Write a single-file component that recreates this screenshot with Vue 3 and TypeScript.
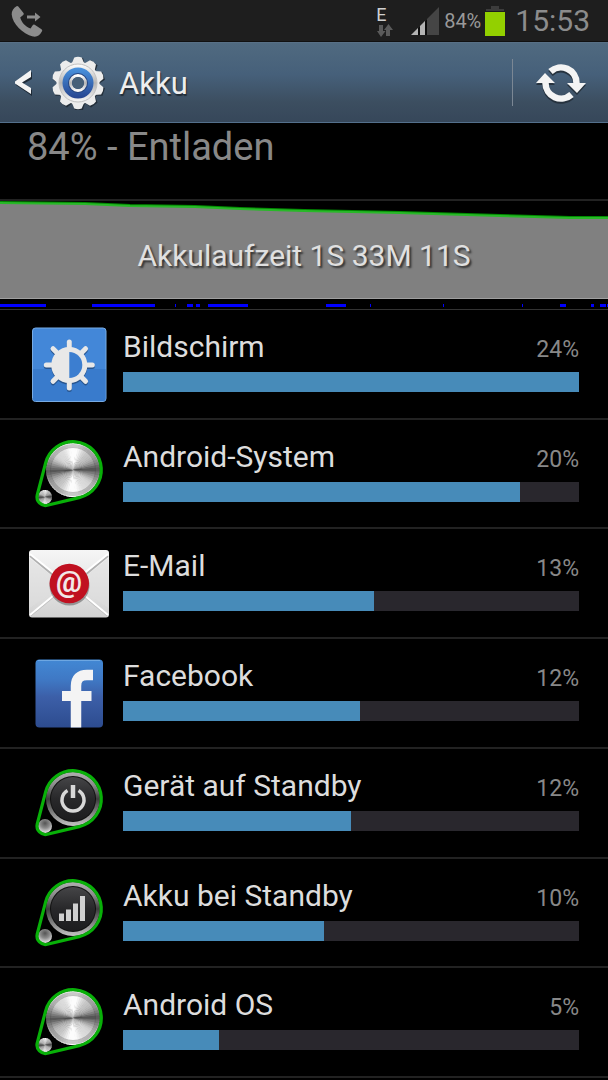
<script setup lang="ts">
type IconName = 'display' | 'metal' | 'mail' | 'facebook' | 'power' | 'signal'

interface UsageItem {
  name: string
  percent: number
  fill: number
  icon: IconName
}

const items: UsageItem[] = [
  { name: 'Bildschirm', percent: 24, fill: 100, icon: 'display' },
  { name: 'Android-System', percent: 20, fill: 87, icon: 'metal' },
  { name: 'E-Mail', percent: 13, fill: 55, icon: 'mail' },
  { name: 'Facebook', percent: 12, fill: 52, icon: 'facebook' },
  { name: 'Gerät auf Standby', percent: 12, fill: 50, icon: 'power' },
  { name: 'Akku bei Standby', percent: 10, fill: 44, icon: 'signal' },
  { name: 'Android OS', percent: 5, fill: 21, icon: 'metal' },
]

// Screen-on periods along the timeline: [start, length]
const activePeriods: [number, number][] = [
  [0, 46], [92, 63], [175, 1], [187, 6], [196, 4], [208, 40], [326, 20],
  [370, 1], [443, 1], [522, 1], [560, 6], [591, 3], [600, 6], [607, 1],
]

const gearTeeth = Array.from({ length: 10 }, (_, i) => i * 36)
const spokes = Array.from({ length: 8 }, (_, i) => i * 45)

function isDrum(icon: IconName): boolean {
  return icon === 'metal' || icon === 'power' || icon === 'signal'
}

// Brushed-metal disc built from thin sectors, brightest at top and bottom
function sectors(cx: number, cy: number, r: number) {
  const count = 60
  const step = (Math.PI * 2) / count
  return Array.from({ length: count }, (_, i) => {
    const a = i * step
    const b = a + step * 1.4
    const light = Math.abs(Math.sin(a + 0.12))
    const ripple = Math.cos(a * 6) * 12
    const v = Math.min(252, Math.round(92 + 155 * Math.pow(light, 0.9) - ripple))
    return {
      d: `M${cx} ${cy}L${cx + r * Math.cos(a)} ${cy + r * Math.sin(a)}A${r} ${r} 0 0 1 ${cx + r * Math.cos(b)} ${cy + r * Math.sin(b)}Z`,
      color: `rgb(${v},${v},${v})`,
    }
  })
}
const bigDisc = sectors(45, 37, 27)
const smallDisc = sectors(17, 64, 7)
</script>

<template>
  <div class="screen">
    <svg class="defs" width="0" height="0" aria-hidden="true">
      <defs>
        <linearGradient id="silver" x1="0" y1="0" x2="0" y2="1">
          <stop offset="0" stop-color="#fff" />
          <stop offset="0.5" stop-color="#b4b4b4" />
          <stop offset="1" stop-color="#f8f8f8" />
        </linearGradient>
        <linearGradient id="gearBlue" x1="0" y1="0" x2="0" y2="1">
          <stop offset="0" stop-color="#4a94e0" />
          <stop offset="1" stop-color="#26448f" />
        </linearGradient>
        <linearGradient id="fbBlue" x1="0" y1="0" x2="0" y2="1">
          <stop offset="0" stop-color="#4288d4" />
          <stop offset="0.3" stop-color="#3f78c4" />
          <stop offset="0.55" stop-color="#3c5fa8" />
          <stop offset="1" stop-color="#2d4c8f" />
        </linearGradient>
        <linearGradient id="paper" x1="0" y1="0" x2="0" y2="1">
          <stop offset="0" stop-color="#f6f6f6" />
          <stop offset="1" stop-color="#d2d2d2" />
        </linearGradient>
        <linearGradient id="rim" x1="0" y1="0" x2="0" y2="1">
          <stop offset="0" stop-color="#b0b0b0" />
          <stop offset="0.25" stop-color="#8a8a8a" />
          <stop offset="0.5" stop-color="#3c3c3c" />
          <stop offset="0.75" stop-color="#808080" />
          <stop offset="1" stop-color="#c4c4c4" />
        </linearGradient>
        <linearGradient id="dark" x1="0" y1="0" x2="0" y2="1">
          <stop offset="0" stop-color="#454547" />
          <stop offset="0.5" stop-color="#28282a" />
          <stop offset="1" stop-color="#1c1c1e" />
        </linearGradient>
        <radialGradient id="bead" cx="0.5" cy="0.3" r="0.7">
          <stop offset="0" stop-color="#555" />
          <stop offset="0.5" stop-color="#8c8c8c" />
          <stop offset="1" stop-color="#e8e8e8" />
        </radialGradient>
      </defs>
    </svg>

    <header class="status">
      <svg class="call" viewBox="0 0 36 36" aria-hidden="true">
        <path d="M9.500 3.200Q10.500 2.500 11.300 3.500L16.500 10Q17.300 11.200 16.200 12.100L13.200 14.500C14.500 19.500 18.500 23.500 23.500 25.500L25.700 22.200Q26.500 21 27.700 21.700L34.500 26.300Q35.700 27.200 35 28.300C33 32 30.300 34.300 26 33.500C15.500 31 5.500 20.500 4.700 11.500C4.500 8 6.500 4.800 9.500 3.200Z" />
        <path d="M20 12.500H28V9.500L33.500 14L28 18.500V15.500H20Z" />
      </svg>
      <div class="network">
        <span>E</span>
        <svg viewBox="0 0 18 13" aria-hidden="true">
          <path d="M3 1H7V7H9.500L5 13L1 7H3ZM10 12V6H8L12.500 0L17 6H14V12Z" />
        </svg>
      </div>
      <svg class="reception" viewBox="0 0 28 28" aria-hidden="true">
        <path d="M0 28L28 0V28Z" fill="#454545" />
        <path d="M0 28L7 21V28ZM9 28V19L14 14V28Z" fill="#b4b4b4" />
        <path d="M7 21L9 19V28H7ZM14 14L16 12V28H14Z" fill="#0c0c0c" />
      </svg>
      <span class="level">84%</span>
      <svg class="battery" viewBox="0 0 20 30" aria-hidden="true">
        <path d="M6 0H14V3H19V5H1V3H6Z" fill="#3c3c3c" />
        <rect y="6" width="20" height="24" fill="#93d000" />
      </svg>
      <time class="clock">15:53</time>
    </header>

    <nav class="action-bar">
      <button class="back" type="button" aria-label="Zurück">
        <svg class="chevron" viewBox="0 0 18 30" aria-hidden="true">
          <path d="M17 4V11L8 16L17 22V28L1 17V15Z" fill="#1e2a36" />
          <path d="M16 2V9L7 14.500L16 20V26L0 15.500V13.500Z" fill="#f4f4f4" />
        </svg>
        <svg class="gear" viewBox="-27 -27 54 54" aria-hidden="true">
          <g fill="#222d38" transform="translate(1 1)">
            <path v-for="a in gearTeeth" :key="a" :transform="`rotate(${a})`" d="M-6 -19L-4 -26H4L6 -19Z" />
            <circle r="21" />
          </g>
          <g fill="#ececec">
            <path v-for="a in gearTeeth" :key="a" :transform="`rotate(${a})`" d="M-6.500 -19L-3.700 -25.500Q0 -27 3.700 -25.500L6.500 -19Z" />
          </g>
          <circle r="21.500" fill="#ececec" />
          <circle r="19" fill="url(#silver)" stroke="#c0c0c0" />
          <circle r="15.500" fill="url(#gearBlue)" />
          <circle r="7.500" fill="none" stroke="#284680" stroke-width="5" />
          <circle r="7.500" fill="none" stroke="url(#silver)" stroke-width="3" />
          <circle r="6" fill="#476078" />
        </svg>
        <span class="title">Akku</span>
      </button>
      <button class="refresh" type="button" aria-label="Aktualisieren">
        <svg viewBox="-26 -22 52 44" aria-hidden="true">
          <g v-for="pass in 2" :key="pass" :class="pass === 1 ? 'shade' : 'face'" :transform="pass === 1 ? 'translate(0 2)' : ''">
            <path d="M-10.500 -11.500A15.500 15.500 0 0 1 15.500 0" fill="none" stroke-width="6.500" />
            <path d="M-15.500 0A15.500 15.500 0 0 0 10.500 11.500" fill="none" stroke-width="6.500" />
            <path d="M6 0H25L16 10ZM-25 0H-6L-16 -10Z" stroke="none" />
          </g>
        </svg>
      </button>
    </nav>

    <main>
      <h1>84% - Entladen</h1>

      <section class="history">
        <svg class="curve" viewBox="0 0 608 98" preserveAspectRatio="none" aria-hidden="true">
          <path d="M0 2L85 3L130 5L195 6L240 8L304 10L400 12L500 15L570 17H608V98H0Z" fill="#808080" />
          <path d="M0 97.500H608" stroke="#a0a0a0" />
          <path d="M0 1L85 2L130 4L195 5L240 7L304 9L400 11L500 14L570 16H608" fill="none" stroke="#008a00" stroke-width="2" />
          <path d="M0 2L85 3L130 5L195 6L240 8L304 10L400 12L500 15L570 17H608" fill="none" stroke="#28b828" stroke-width="2" />
        </svg>
        <p>Akkulaufzeit 1S 33M 11S</p>
        <svg class="timeline" viewBox="0 0 608 10" preserveAspectRatio="none" aria-hidden="true">
          <rect v-for="[x, w] in activePeriods" :key="x" :x="x" y="5" :width="w" height="3" fill="#00f" />
        </svg>
      </section>

      <ul class="usage">
        <li v-for="item in items" :key="item.name">
          <button class="row" type="button">
            <svg class="icon" viewBox="0 0 82 82" aria-hidden="true">
              <g v-if="item.icon === 'display'">
                <rect x="4.500" y="5" width="73.500" height="73.500" rx="3" fill="#4387d8" stroke="#77abe4" />
                <path d="M5 46H77.500V76Q77.500 78 75 78H7.500Q5 78 5 76Z" fill="#397bcc" />
                <g transform="translate(41.300 43.500)" stroke="#28558e" fill="#28558e" stroke-width="5" stroke-linecap="round">
                  <path v-for="a in spokes" :key="a" d="M0 -15V-23" :transform="`rotate(${a})`" />
                  <circle r="15.500" />
                </g>
                <g transform="translate(41.300 42)" stroke="#e8e8e8" fill="#e8e8e8" stroke-width="5" stroke-linecap="round">
                  <path v-for="a in spokes" :key="a" d="M0 -15V-23" :transform="`rotate(${a})`" />
                  <circle r="15.500" />
                  <path d="M0 -13A13 13 0 0 1 0 13Z" fill="#3c7ed0" stroke="none" />
                </g>
              </g>

              <g v-else-if="item.icon === 'mail'">
                <rect x="1" y="8" width="80" height="67.500" rx="3" fill="url(#paper)" />
                <path d="M1.500 16L41 48L80.500 16V66L41 40L1.500 66Z" fill="#dedede" opacity="0.6" />
                <path d="M2 73L31 49M80 73L51 49" stroke="#fff" stroke-width="2" />
                <path d="M3 74L32 50M79 74L50 50" stroke="#c4c4c4" />
                <path d="M2 14L31 38M80 14L51 38" stroke="#b0b0b0" stroke-width="2" />
                <path d="M2 12L32 36M80 12L50 36" stroke="#fff" stroke-width="2" />
                <circle cx="41.500" cy="43.500" r="20" fill="#777" opacity="0.7" />
                <circle cx="41.300" cy="41.500" r="19.700" fill="#c01020" />
                <text x="41" y="50" text-anchor="middle" class="at">@</text>
              </g>

              <g v-else-if="item.icon === 'facebook'">
                <rect x="7.500" y="7.500" width="67.500" height="68" rx="4" fill="url(#fbBlue)" />
                <path d="M10 8.500H72" stroke="#6da7e2" />
                <rect x="34" y="39" width="29.500" height="10" fill="#f4f4f4" />
                <path d="M48 75.500V34Q48 23 59 23H65" fill="none" stroke="#f4f4f4" stroke-width="10.500" />
              </g>

              <g v-if="isDrum(item.icon)">
                <template v-if="item.icon === 'metal'">
                  <path v-for="(s, i) in bigDisc" :key="i" :d="s.d" :fill="s.color" />
                  <circle cx="45" cy="37" r="24.500" fill="none" stroke="#6a6a6a" stroke-width="3" opacity="0.35" />
                  <circle cx="45" cy="37" r="22.500" fill="none" stroke="#4d4d4d" opacity="0.35" />
                  <path v-for="(s, i) in smallDisc" :key="`s${i}`" :d="s.d" :fill="s.color" />
                </template>
                <template v-else>
                  <circle cx="45" cy="37" r="27" fill="url(#rim)" />
                  <circle cx="45" cy="37" r="23" fill="#111" />
                  <circle cx="45" cy="37" r="22" fill="url(#dark)" />
                  <circle cx="17" cy="64" r="7" fill="url(#bead)" />
                </template>
                <g v-if="item.icon === 'power'" fill="none" stroke="#d8d8d8">
                  <path d="M39.500 28.500A11 11 0 1 0 50.500 28.500" stroke-width="3.500" />
                  <path d="M45 23V36" stroke-width="4.500" />
                </g>
                <path v-if="item.icon === 'signal'" d="M31 41.500H36V49H31ZM38 37.500H43V49H38ZM45 31.500H50V49H45ZM52 24H57V49H52Z" fill="#d0d0d0" />
                <path d="M17.500 30.300A28.300 28.300 0 1 1 51.200 64.600L19.300 72.300A8.500 8.500 0 0 1 9.200 62.100Z" fill="none" stroke="#08b008" stroke-width="3.200" />
              </g>
            </svg>
            <span class="name">{{ item.name }}</span>
            <span class="percent">{{ item.percent }}%</span>
            <span class="track">
              <span class="fill" :style="{ width: item.fill + '%' }"></span>
            </span>
          </button>
        </li>
      </ul>
    </main>
  </div>
</template>

<style>
body {
  margin: 0;
  background: #000;
}
</style>

<style scoped>
.screen {
  display: flex;
  flex-direction: column;
  box-sizing: border-box;
  min-height: 100vh;
  padding-bottom: 2px;
  background: #000;
  color: #ddd;
  font-family: Roboto, "Noto Sans", sans-serif;
}

.defs {
  position: absolute;
}

button {
  border: 0;
  padding: 0;
  background: none;
  color: inherit;
  font: inherit;
  text-align: left;
  cursor: pointer;
}

.status {
  display: flex;
  align-items: center;
  box-sizing: border-box;
  height: 42px;
  padding: 0 18px 0 7px;
  background: #1e1e1e;
  border-bottom: 1px solid #111;
}

.call {
  width: 36px;
  height: 36px;
  margin-right: auto;
  fill: #8c8c8c;
}

.network {
  display: flex;
  flex-direction: column;
  gap: 1px;
  width: 35px;
  padding-top: 2px;
  font-size: 18px;
  line-height: 16px;
  color: #d0d0d0;
}

.network svg {
  width: 18px;
  height: 13px;
  fill: #5a5a5a;
}

.reception {
  width: 28px;
  height: 28px;
  margin-right: 5px;
}

.level {
  margin-right: 4px;
  font-size: 20px;
  color: #999;
}

.battery {
  width: 20px;
  height: 30px;
  margin-right: 10px;
}

.clock {
  font-size: 30px;
  color: #8c8c8c;
}

.action-bar {
  display: flex;
  align-items: center;
  justify-content: space-between;
  box-sizing: border-box;
  height: 81px;
  background: linear-gradient(#506a80, #46607a 40%, #3c4e60 75%, #36475a);
  border-top: 1px solid #587086;
  border-bottom: 1px solid #54708c;
}

.back {
  display: flex;
  align-items: center;
  padding-left: 15px;
}

.title {
  padding-top: 2px;
  font-size: 31px;
  color: #eee;
  text-shadow: 1px 2px 1px #222c36;
}

.chevron {
  width: 18px;
  height: 30px;
  margin-right: 18px;
}

.gear {
  width: 54px;
  height: 54px;
  margin-right: 14px;
}

.refresh {
  display: flex;
  align-items: center;
  justify-content: center;
  width: 96px;
  height: 47px;
  border-left: 1px solid #7b8794;
}

.refresh svg {
  width: 52px;
  height: 44px;
}

.shade {
  fill: #26323e;
  stroke: #26323e;
}

.face {
  fill: #f4f4f4;
  stroke: #f4f4f4;
}

main {
  display: flex;
  flex: 1;
  flex-direction: column;
}

h1 {
  margin: 0;
  padding: 0 27px 28px;
  font-size: 38px;
  font-weight: 400;
  line-height: 48px;
  color: #888;
  border-bottom: 2px solid #222;
}

.history {
  display: grid;
}

.curve {
  grid-area: 1 / 1;
  width: 100%;
  height: 98px;
}

.history p {
  grid-area: 1 / 1;
  margin: 0;
  padding-top: 10px;
  align-self: center;
  text-align: center;
  font-size: 30px;
  color: #e0e0e0;
  text-shadow: 2px 2px 2px #333;
}

.timeline {
  width: 100%;
  height: 10px;
}

.usage {
  display: grid;
  flex: 1;
  grid-auto-rows: 1fr;
  margin: 0;
  padding: 0;
  list-style: none;
  border-top: 1px solid #333;
}

.usage li {
  border-bottom: 2px solid #222;
}

.row {
  display: grid;
  grid-template-columns: 82px 1fr auto;
  grid-template-rows: 38px 20px;
  column-gap: 13px;
  row-gap: 5px;
  align-items: baseline;
  width: 100%;
  padding: 19px 29px 0 28px;
}

.icon {
  grid-row: 1 / 3;
  align-self: start;
  width: 82px;
  height: 82px;
  margin: -6px 0 -13px;
}

.name {
  font-size: 30px;
  line-height: 36px;
}

.percent {
  font-size: 23px;
  color: #888;
}

.track {
  grid-column: 2 / 4;
  display: block;
  height: 20px;
  background: #29272d;
}

.fill {
  display: block;
  height: 20px;
  background: #478bb9;
}

.at {
  font-family: Roboto, sans-serif;
  font-size: 29px;
  font-weight: 700;
  fill: #f2e8e8;
}
</style>
